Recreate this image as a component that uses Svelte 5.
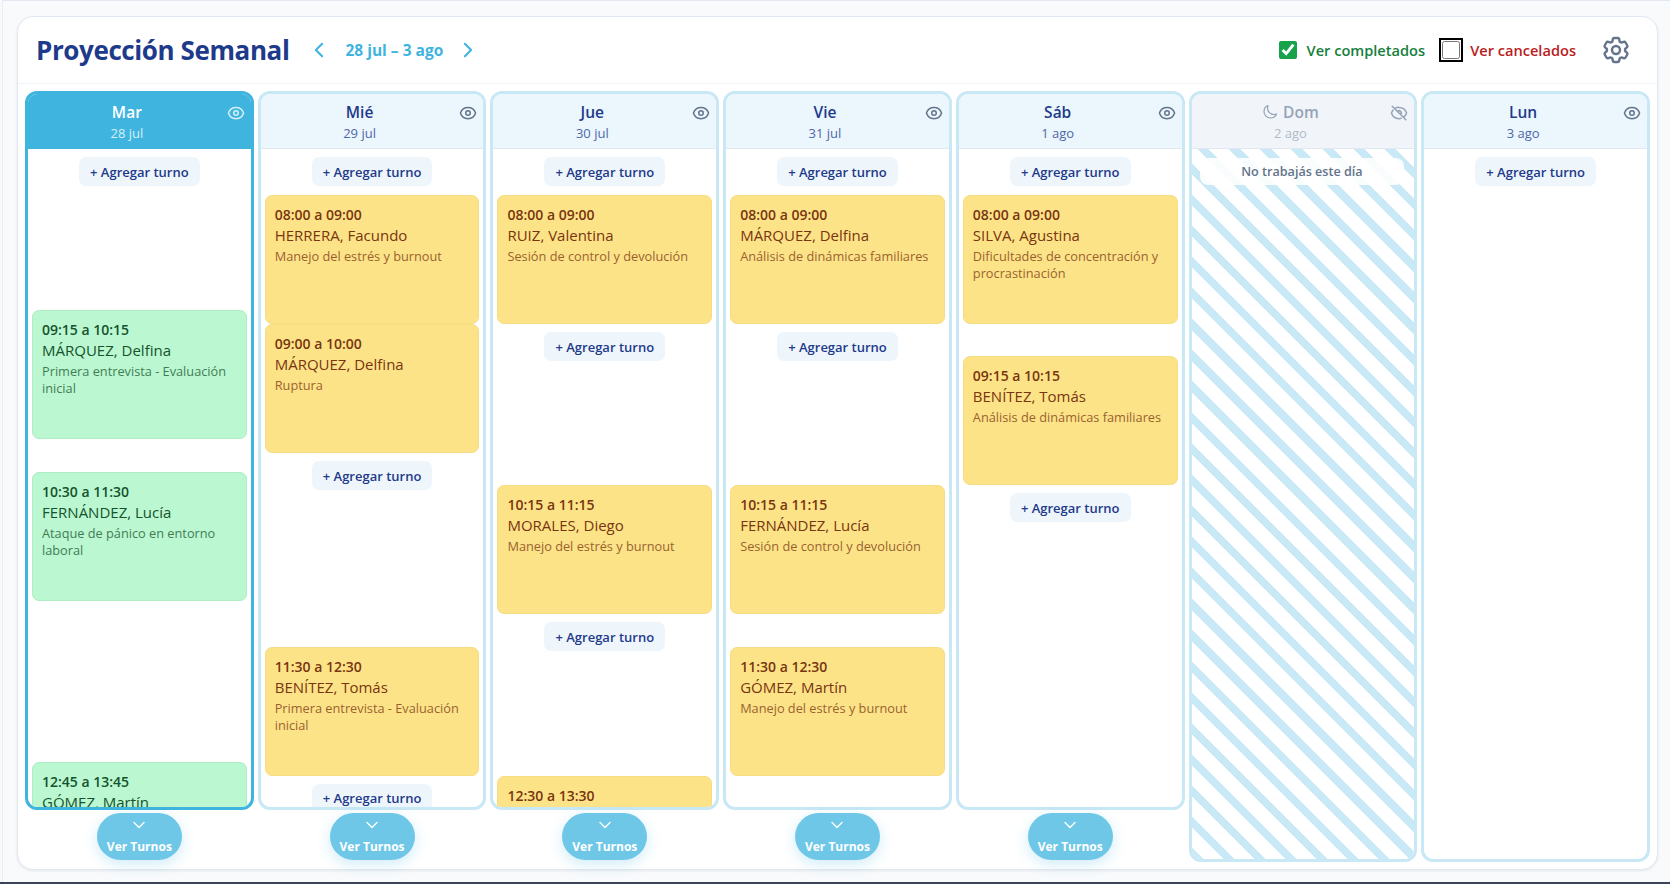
<script>
  const HOUR_PX = 129;
  const TOP_OF_DAY = 38; // 08:00 below the first "Agregar turno"

  const ev = (time, name, note, start) => ({ time, name, note, start });
  const add = { add: true };

  const days = [
    { name: 'Mar', date: '28 jul', today: true, done: true, shift: 46, items: [
      add,
      ev('09:15 a 10:15', 'MÁRQUEZ, Delfina', 'Primera entrevista - Evaluación inicial', 555),
      ev('10:30 a 11:30', 'FERNÁNDEZ, Lucía', 'Ataque de pánico en entorno laboral', 630),
      ev('12:45 a 13:45', 'GÓMEZ, Martín', '', 765)
    ] },
    { name: 'Mié', date: '29 jul', items: [
      add,
      ev('08:00 a 09:00', 'HERRERA, Facundo', 'Manejo del estrés y burnout', 480),
      ev('09:00 a 10:00', 'MÁRQUEZ, Delfina', 'Ruptura', 540),
      add,
      ev('11:30 a 12:30', 'BENÍTEZ, Tomás', 'Primera entrevista - Evaluación inicial', 690),
      add
    ] },
    { name: 'Jue', date: '30 jul', items: [
      add,
      ev('08:00 a 09:00', 'RUIZ, Valentina', 'Sesión de control y devolución', 480),
      add,
      ev('10:15 a 11:15', 'MORALES, Diego', 'Manejo del estrés y burnout', 615),
      add,
      ev('12:30 a 13:30', '', '', 750)
    ] },
    { name: 'Vie', date: '31 jul', items: [
      add,
      ev('08:00 a 09:00', 'MÁRQUEZ, Delfina', 'Análisis de dinámicas familiares', 480),
      add,
      ev('10:15 a 11:15', 'FERNÁNDEZ, Lucía', 'Sesión de control y devolución', 615),
      ev('11:30 a 12:30', 'GÓMEZ, Martín', 'Manejo del estrés y burnout', 690)
    ] },
    { name: 'Sáb', date: '1 ago', items: [
      add,
      ev('08:00 a 09:00', 'SILVA, Agustina', 'Dificultades de concentración y procrastinación', 480),
      ev('09:15 a 10:15', 'BENÍTEZ, Tomás', 'Análisis de dinámicas familiares', 555),
      add
    ] },
    { name: 'Dom', date: '2 ago', off: true, items: [] },
    { name: 'Lun', date: '3 ago', tall: true, items: [add] }
  ];

  // works out the free space above each row from the turn's start time
  function layout(day) {
    let y = 0;
    return day.items.map((item) => {
      let gap;
      if (item.add) {
        gap = y === 0 ? 0 : 8;
        y += gap + 29;
      } else {
        const top = TOP_OF_DAY + ((item.start - 480) * HOUR_PX) / 60 - (day.shift || 0);
        gap = top - y;
        y = top + HOUR_PX;
      }
      return { ...item, gap };
    });
  }
</script>

{#snippet eye()}
  <svg class="eye" viewBox="0 0 24 24" fill="none" stroke="currentColor" stroke-width="2" stroke-linecap="round" stroke-linejoin="round">
    <path d="M2.036 12.322a1.012 1.012 0 0 1 0-.639C3.423 7.51 7.36 4.5 12 4.5c4.638 0 8.573 3.007 9.963 7.178.07.207.07.431 0 .639C20.577 16.49 16.64 19.5 12 19.5c-4.638 0-8.573-3.007-9.963-7.178Z" />
    <path d="M15 12a3 3 0 1 1-6 0 3 3 0 0 1 6 0Z" />
  </svg>
{/snippet}

{#snippet eyeOff()}
  <svg class="eye" viewBox="0 0 24 24" fill="none" stroke="currentColor" stroke-width="2" stroke-linecap="round" stroke-linejoin="round">
    <path d="M3.98 8.223A10.477 10.477 0 0 0 1.934 12C3.226 16.338 7.244 19.5 12 19.5c.993 0 1.953-.138 2.863-.395M6.228 6.228A10.451 10.451 0 0 1 12 4.5c4.756 0 8.773 3.162 10.065 7.498a10.522 10.522 0 0 1-4.293 5.774M6.228 6.228 3 3m3.228 3.228 3.65 3.65m7.894 7.894L21 21m-3.228-3.228-3.65-3.65m0 0a3 3 0 1 0-4.243-4.243m4.242 4.242L9.88 9.88" />
  </svg>
{/snippet}

<div class="screen">
  <div class="page">
    <section class="card">
      <header class="top">
        <h1>Proyección Semanal</h1>
        <nav class="week">
          <button class="arrow" aria-label="Semana anterior">
            <svg viewBox="0 0 24 24" fill="none" stroke="currentColor" stroke-width="2.5" stroke-linecap="round" stroke-linejoin="round"><path d="M15.75 19.5 8.25 12l7.5-7.5" /></svg>
          </button>
          <span class="range">28 jul – 3 ago</span>
          <button class="arrow" aria-label="Semana siguiente">
            <svg viewBox="0 0 24 24" fill="none" stroke="currentColor" stroke-width="2.5" stroke-linecap="round" stroke-linejoin="round"><path d="m8.25 4.5 7.5 7.5-7.5 7.5" /></svg>
          </button>
        </nav>
        <div class="filters">
          <label class="filter ok"><input type="checkbox" checked /> Ver completados</label>
          <label class="filter ko"><input class="focused" type="checkbox" /> Ver cancelados</label>
          <button class="gear" aria-label="Configuración">
            <svg viewBox="0 0 24 24" fill="none" stroke="currentColor" stroke-width="1.8" stroke-linecap="round" stroke-linejoin="round">
              <path d="M9.594 3.94c.09-.542.56-.94 1.11-.94h2.593c.55 0 1.02.398 1.11.94l.213 1.281c.063.374.313.686.645.87.074.04.147.083.22.127.325.196.72.257 1.075.124l1.217-.456a1.125 1.125 0 0 1 1.37.49l1.296 2.247a1.125 1.125 0 0 1-.26 1.431l-1.003.827c-.293.241-.438.613-.43.992a7.723 7.723 0 0 1 0 .255c-.008.378.137.75.43.991l1.004.827c.424.35.534.955.26 1.43l-1.298 2.247a1.125 1.125 0 0 1-1.369.491l-1.217-.456c-.355-.133-.75-.072-1.076.124a6.47 6.47 0 0 1-.22.128c-.331.183-.581.495-.644.869l-.213 1.281c-.09.543-.56.94-1.11.94h-2.594c-.55 0-1.019-.398-1.11-.94l-.213-1.281c-.062-.374-.312-.686-.644-.87a6.52 6.52 0 0 1-.22-.127c-.325-.196-.72-.257-1.076-.124l-1.217.456a1.125 1.125 0 0 1-1.369-.49l-1.297-2.247a1.125 1.125 0 0 1 .26-1.431l1.004-.827c.292-.24.437-.613.43-.991a6.932 6.932 0 0 1 0-.255c.007-.38-.138-.751-.43-.992l-1.004-.827a1.125 1.125 0 0 1-.26-1.43l1.297-2.247a1.125 1.125 0 0 1 1.37-.491l1.216.456c.356.133.751.072 1.076-.124.072-.044.146-.086.22-.128.332-.183.582-.495.644-.869l.214-1.28Z" />
              <path d="M15 12a3 3 0 1 1-6 0 3 3 0 0 1 6 0Z" />
            </svg>
          </button>
        </div>
      </header>

      <div class="week-grid">
        {#each days as day}
          <div class="slot">
            <article class="day" class:today={day.today} class:off={day.off} class:tall={day.off || day.tall}>
              <div class="day-head">
                <div class="day-title">
                  <div class="day-name">
                    {#if day.off}
                      <svg class="moon" viewBox="0 0 24 24" fill="none" stroke="currentColor" stroke-width="1.8" stroke-linecap="round" stroke-linejoin="round"><path d="M21.752 15.002A9.72 9.72 0 0 1 18 15.75c-5.385 0-9.75-4.365-9.75-9.75 0-1.33.266-2.597.748-3.752A9.753 9.753 0 0 0 3 11.25C3 16.635 7.365 21 12.75 21a9.753 9.753 0 0 0 9.002-5.998Z" /></svg>
                    {/if}
                    {day.name}
                  </div>
                  <div class="day-date">{day.date}</div>
                </div>
                {#if day.off}{@render eyeOff()}{:else}{@render eye()}{/if}
              </div>
              <div class="day-body">
                {#if day.off}
                  <div class="no-work">No trabajás este día</div>
                {/if}
                {#each layout(day) as row}
                  {#if row.add}
                    <button class="add" style="margin-top: {row.gap}px">+ Agregar turno</button>
                  {:else}
                    <div class="turn" class:done={day.done} style="margin-top: {row.gap}px">
                      <div class="turn-time">{row.time}</div>
                      <div class="turn-name">{row.name}</div>
                      <div class="turn-note">{row.note}</div>
                    </div>
                  {/if}
                {/each}
              </div>
            </article>
            {#if !day.off && !day.tall}
              <button class="more">
                <svg viewBox="0 0 24 24" fill="none" stroke="currentColor" stroke-width="2" stroke-linecap="round" stroke-linejoin="round"><path d="m4.5 8.25 7.5 7.5 7.5-7.5" /></svg>
                Ver Turnos
              </button>
            {/if}
          </div>
        {/each}
      </div>
    </section>
  </div>
</div>

<style>
  :global(body) {
    background: #f8fafc;
    font-family: "Open Sans", "Noto Sans", sans-serif;
  }
  .screen {
    height: 884px;
    box-sizing: border-box;
    border-bottom: 2px solid #3c4257;
    overflow: hidden;
  }
  .page {
    height: 100%;
    box-sizing: border-box;
    margin-left: 2px;
    padding: 15px 12px 0 14px;
    border-top: 1px solid #e2e8f0;
    border-left: 1px solid #e9eef4;
  }
  .card {
    height: 854px;
    box-sizing: border-box;
    background: #fff;
    border: 1px solid #e2e8f0;
    border-radius: 16px;
    box-shadow: 0 1px 3px rgba(15, 23, 42, 0.08);
  }
  .top {
    height: 67px;
    box-sizing: border-box;
    display: flex;
    align-items: center;
    padding: 0 25px 0 18px;
    border-bottom: 1px solid #f1f5f9;
  }
  h1 {
    margin: 0;
    font-size: 26px;
    font-weight: 700;
    letter-spacing: -0.4px;
    color: #1e3a8a;
  }
  .week {
    display: flex;
    align-items: center;
    margin-left: 20px;
    color: #3eb4de;
  }
  .arrow, .gear {
    padding: 0;
    border: 0;
    background: none;
    color: inherit;
    display: flex;
  }
  .arrow svg {
    width: 20px;
    height: 20px;
  }
  .range {
    margin: 0 15px 0 16px;
    font-size: 15.5px;
    font-weight: 700;
  }
  .filters {
    margin-left: auto;
    display: flex;
    align-items: center;
  }
  .filter {
    display: flex;
    align-items: center;
    gap: 10px;
    font-size: 14.6px;
    font-weight: 600;
  }
  .filter input {
    width: 18px;
    height: 18px;
    margin: 0;
  }
  .ok {
    color: #15803d;
  }
  .ok input {
    accent-color: #16a34a;
  }
  .ko {
    color: #b91c1c;
    margin-left: 17px;
  }
  .focused {
    outline: 2px solid #000;
    outline-offset: 1px;
    border-radius: 4px;
  }
  .gear {
    margin-left: 24px;
    color: #64748b;
  }
  .gear svg {
    width: 32px;
    height: 32px;
  }
  .week-grid {
    display: grid;
    grid-template-columns: repeat(7, minmax(0, 1fr));
    gap: 4px;
    padding: 7px 7px 0;
    align-items: start;
  }
  .slot {
    display: flex;
    flex-direction: column;
    align-items: center;
  }
  .day {
    width: 100%;
    height: 719px;
    box-sizing: border-box;
    display: flex;
    flex-direction: column;
    border: 3px solid #c8e8f5;
    border-radius: 12px;
    overflow: hidden;
    background: #fff;
  }
  .day.tall {
    height: 771px;
  }
  .day.today {
    border-color: #3eb4de;
  }
  .day-head {
    height: 55px;
    flex: none;
    box-sizing: border-box;
    display: flex;
    align-items: flex-start;
    padding: 7px 6px 0 0;
    background: #ebf6fd;
    border-bottom: 1px solid #e2e8f0;
    color: #64748b;
  }
  .today .day-head {
    background: #3eb4de;
    border-bottom-color: #3eb4de;
    color: #d6f0fa;
  }
  .off .day-head {
    background: #f1f5f9;
    color: #94a3b8;
  }
  .day-title {
    flex: 1;
    text-align: center;
  }
  .day-name {
    display: flex;
    justify-content: center;
    align-items: center;
    gap: 5px;
    height: 22px;
    font-size: 15.5px;
    font-weight: 600;
    color: #1e3a8a;
  }
  .day-date {
    margin-top: 1px;
    font-size: 13px;
    line-height: 18px;
    color: #4f67a8;
  }
  .today .day-name {
    color: #fff;
  }
  .today .day-date {
    color: #d6f0fa;
  }
  .off .day-name {
    color: #94a3b8;
  }
  .off .day-date {
    color: #b0bbcb;
  }
  .moon {
    width: 16px;
    height: 16px;
  }
  .eye {
    width: 18px;
    height: 18px;
    margin: 3px 0 0 1px;
    flex: none;
  }
  .day-body {
    flex: 1;
    min-height: 0;
    overflow: hidden;
    display: flex;
    flex-direction: column;
    align-items: center;
    padding: 8px 4px 0;
  }
  .off .day-body {
    background: repeating-linear-gradient(45deg, #c8e9f5, #c8e9f5 8px, #fff 8px, #fff 22px);
  }
  .no-work {
    align-self: stretch;
    margin: 1px 6px 0 4px;
    height: 27px;
    line-height: 27px;
    text-align: center;
    background: rgba(255, 255, 255, 0.88);
    border-radius: 8px;
    font-size: 12.6px;
    font-weight: 600;
    color: #64748b;
  }
  .add {
    flex: none;
    height: 29px;
    box-sizing: border-box;
    padding: 0 11px;
    border: 0;
    border-radius: 7px;
    background: #eef6fc;
    color: #1e3a8a;
    font-family: inherit;
    font-size: 13px;
    font-weight: 600;
  }
  .turn {
    flex: none;
    align-self: stretch;
    height: 129px;
    box-sizing: border-box;
    padding: 9px 9px;
    background: #fde388;
    border: 1px solid #f7dc86;
    border-radius: 7px;
    color: #78350f;
  }
  .turn.done {
    background: #bbf7d0;
    border-color: #aeeec4;
    color: #14532d;
  }
  .turn-time {
    font-size: 14px;
    font-weight: 600;
    line-height: 20px;
  }
  .turn-name {
    font-size: 15px;
    line-height: 21px;
  }
  .turn-note {
    margin-top: 2px;
    font-size: 12.75px;
    line-height: 17px;
    opacity: 0.75;
  }
  .more {
    margin-top: 3px;
    height: 47px;
    box-sizing: border-box;
    padding: 0 10px;
    border: 0;
    border-radius: 24px;
    background: #6fc7e8;
    color: #fff;
    font-family: inherit;
    font-size: 12px;
    font-weight: 700;
    display: flex;
    flex-direction: column;
    align-items: center;
    box-shadow: 0 4px 14px rgba(62, 180, 222, 0.25);
  }
  .more svg {
    width: 16px;
    height: 16px;
    margin: 4px 0 5px;
  }
</style>
